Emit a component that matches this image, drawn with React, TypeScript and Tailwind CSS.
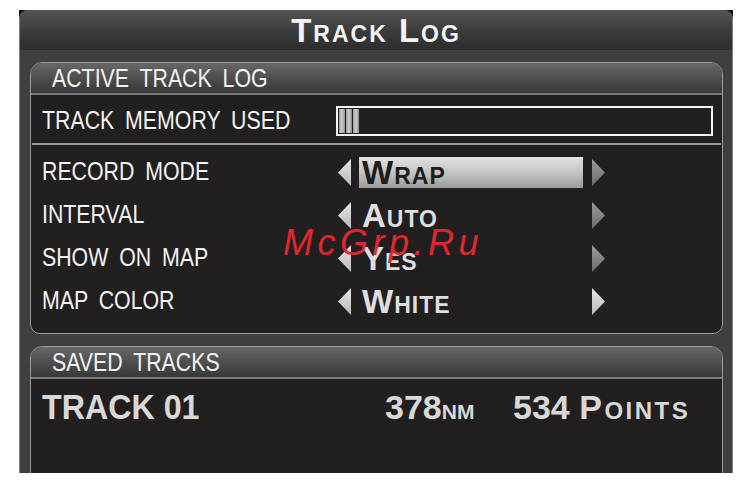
import React from "react";

const FONT = "font-['Liberation_Sans',Arial,sans-serif]";

// Garmin-style small caps: first letter of each word tall, rest short
const SmallCaps = ({ text, big, small }: { text: string; big: string; small: string }) => (
  <span className="inline-flex items-baseline whitespace-pre">
    {text.split(" ").map((word, i) => (
      <span key={i} className="inline-flex items-baseline">
        {i > 0 && <span className={big}> </span>}
        <span className={big}>{word[0]}</span>
        <span className={small}>{word.slice(1).toUpperCase()}</span>
      </span>
    ))}
  </span>
);

const Label = ({ children }: { children: React.ReactNode }) => (
  <span className="inline-block origin-left scale-x-[0.82] whitespace-pre text-[26px] leading-none text-[#f2f2f2] [word-spacing:6px]">
    {children}
  </span>
);

const Arrow = ({ dir, bright = true }: { dir: "left" | "right"; bright?: boolean }) => (
  <svg width="14" height="27" viewBox="0 0 14 27" className="shrink-0">
    <defs>
      <linearGradient id={`ar-${dir}-${bright}`} x1="0" y1="0" x2="0" y2="1">
        <stop offset="0" stopColor={bright ? "#e6e6e6" : "#9a9a9a"} />
        <stop offset="1" stopColor={bright ? "#b8b8b8" : "#6c6c6c"} />
      </linearGradient>
    </defs>
    <polygon
      points={dir === "left" ? "14,0 14,27 1,13.5" : "0,0 0,27 13,13.5"}
      fill={`url(#ar-${dir}-${bright})`}
    />
  </svg>
);

const GroupHeader = ({ title }: { title: string }) => (
  <div className="flex h-[32px] items-center rounded-t-[11px] border-b-2 border-[#7a7a7a] bg-gradient-to-b from-[#686868] via-[#4e4e4e] to-[#383838] pl-[21px]">
    <Label>{title}</Label>
  </div>
);

const settings = [
  { label: "RECORD MODE", value: "Wrap", selected: true, rightBright: false },
  { label: "INTERVAL", value: "Auto", selected: false, rightBright: false },
  { label: "SHOW ON MAP", value: "Yes", selected: false, rightBright: false },
  { label: "MAP COLOR", value: "White", selected: false, rightBright: true },
];

export default function App() {
  return (
    <div className={`relative h-[485px] w-[751px] bg-white pl-[19px] pt-[10px] ${FONT}`}>
      <div className="h-[463px] w-[714px] overflow-hidden bg-[#111]">
        <div className="flex h-full flex-col rounded-t-[9px] border-x border-[#7d7d7d] bg-[#3f3f3f]">
          {/* title bar */}
          <div className="flex h-[40px] shrink-0 items-center justify-center rounded-t-[9px] bg-gradient-to-b from-[#555] via-[#3c3c3c] to-[#2c2c2c] font-bold tracking-[2px] text-[#f4f4f4]">
            <SmallCaps text="Track Log" big="text-[33px] leading-none" small="text-[23px] leading-none" />
          </div>

          {/* active track log */}
          <div className="ml-[10px] mt-[12px] w-[693px] shrink-0 rounded-b-[10px] rounded-t-[12px] border border-[#9a9a9a] bg-[#221f20]">
            <GroupHeader title="ACTIVE TRACK LOG" />
            <div className="pb-[10px] pt-[11px]">
              <div className="flex h-[30px] items-center pl-[11px]">
                <div className="w-[294px]">
                  <Label>TRACK MEMORY USED</Label>
                </div>
                <div className="flex h-[30px] w-[377px] items-stretch border-2 border-[#f4f4f4] p-[1px]">
                  <div className="flex gap-[1px]">
                    <div className="w-[6px] bg-gradient-to-r from-[#9a9a9a] via-[#d0d0d0] to-[#8a8a8a]" />
                    <div className="w-[6px] bg-gradient-to-r from-[#9a9a9a] via-[#d0d0d0] to-[#8a8a8a]" />
                    <div className="w-[6px] bg-gradient-to-r from-[#9a9a9a] via-[#d0d0d0] to-[#8a8a8a]" />
                  </div>
                </div>
              </div>
              <div className="mx-[1px] mt-[7px] h-[2px] bg-[#9a9a9a]" />
              <div className="mt-[6px]">
                {settings.map((s) => (
                  <div key={s.label} className="flex h-[43px] items-center pl-[11px]">
                    <div className="w-[295px]">
                      <Label>{s.label}</Label>
                    </div>
                    <Arrow dir="left" />
                    <div
                      className={`ml-[8px] flex h-[31px] w-[224px] items-center pl-[3px] font-bold tracking-[1px] ${
                        s.selected
                          ? "bg-gradient-to-b from-[#e2e2e2] via-[#c4c4c4] to-[#9c9c9c] text-[#1e1e1e]"
                          : "text-[#dedede]"
                      }`}
                    >
                      <SmallCaps text={s.value} big="text-[33px] leading-none" small="text-[23px] leading-none" />
                    </div>
                    <div className="ml-[9px]">
                      <Arrow dir="right" bright={s.rightBright} />
                    </div>
                  </div>
                ))}
              </div>
            </div>
          </div>

          {/* saved tracks */}
          <div className="ml-[10px] mt-[12px] h-[140px] w-[693px] shrink-0 rounded-t-[12px] border border-[#9a9a9a] bg-[#221f20]">
            <GroupHeader title="SAVED TRACKS" />
            <div className="flex h-[56px] items-center pl-[11px] font-bold text-[#d8d8d8]">
              <div className="w-[343px]">
                <span className="inline-block origin-left scale-x-[0.92] whitespace-pre text-[35px] leading-none">
                  TRACK 01
                </span>
              </div>
              <div className="flex w-[128px] items-baseline leading-none">
                <span className="text-[34px]">378</span>
                <span className="text-[21px]">NM</span>
              </div>
              <div className="flex items-baseline whitespace-pre leading-none">
                <span className="text-[34px]">534 </span>
                <span className="tracking-[2.5px]">
                  <SmallCaps text="Points" big="text-[34px] leading-none" small="text-[24px] leading-none" />
                </span>
              </div>
            </div>
          </div>
        </div>
      </div>

      {/* site stamp */}
      <span className="absolute left-[283px] top-[225px] text-[36px] italic leading-none tracking-[4.5px] text-[#e3262d]">
        McGrp.Ru
      </span>
    </div>
  );
}
